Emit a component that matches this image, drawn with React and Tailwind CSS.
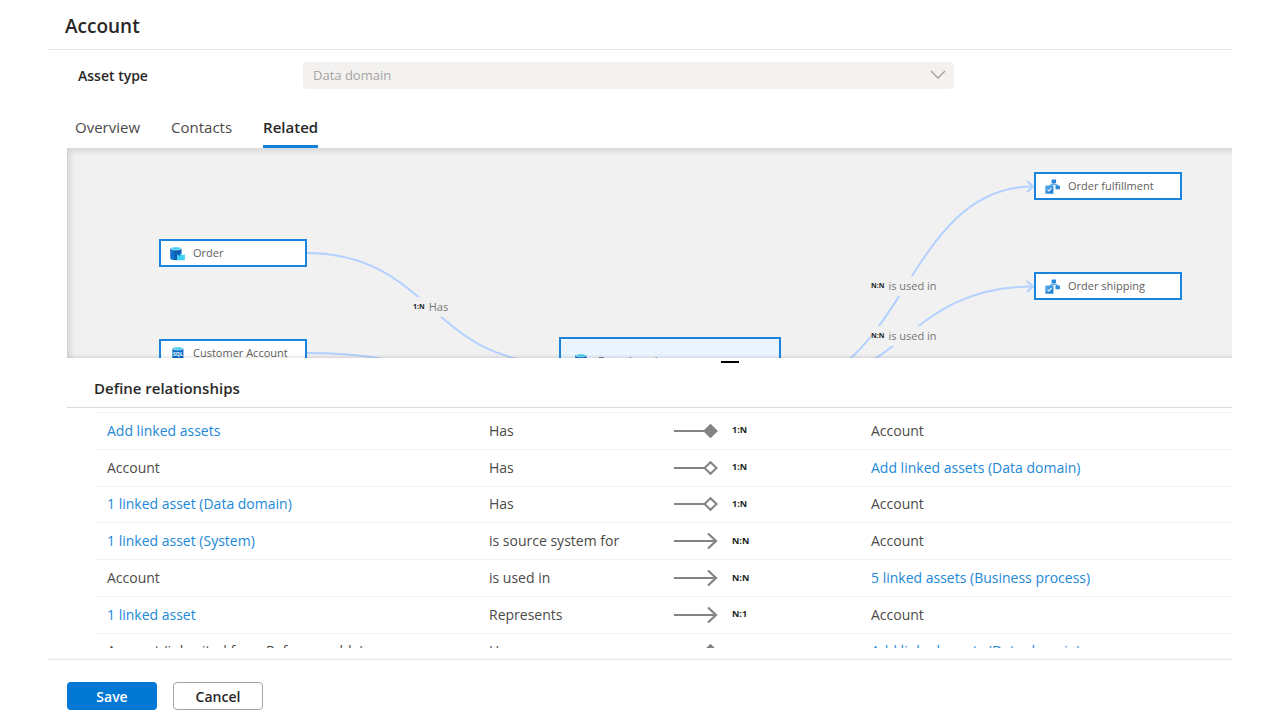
import React from "react";

const tabs = ["Overview", "Contacts", "Related"];

const rows = [
  { from: "Add linked assets", fromLink: true, verb: "Has", kind: "solid", ratio: "1:N", to: "Account" },
  { from: "Account", verb: "Has", kind: "hollow", ratio: "1:N", to: "Add linked assets (Data domain)", toLink: true },
  { from: "1 linked asset (Data domain)", fromLink: true, verb: "Has", kind: "hollow", ratio: "1:N", to: "Account" },
  { from: "1 linked asset (System)", fromLink: true, verb: "is source system for", kind: "arrow", ratio: "N:N", to: "Account" },
  { from: "Account", verb: "is used in", kind: "arrow", ratio: "N:N", to: "5 linked assets (Business process)", toLink: true },
  { from: "1 linked asset", fromLink: true, verb: "Represents", kind: "arrow", ratio: "N:1", to: "Account" },
  { from: "Account (inherited from Referenceable)", verb: "Has", kind: "solid", ratio: "1:N", to: "Add linked assets (Data domain)", toLink: true },
];

function DatabaseIcon({ crown }) {
  return (
    <svg width="15" height="15" viewBox="0 0 16 16" aria-hidden="true">
      <path d="M0.5 2.5v10.6c0 1.1 2.6 2 5.900 2s5.900-.9 5.900-2V2.500z" fill="#0a5fb4" />
      <path d="M0.5 2.500v10.600c0 1 1.800 1.700 4.200 1.900V3z" fill="#1173cf" />
      <ellipse cx="6.400" cy="2.500" rx="5.900" ry="2" fill="#e4f6fb" />
      <ellipse cx="6.400" cy="2.600" rx="4.700" ry="1.400" fill="#45cfee" />
      {crown && <path d="M7.500 8.700l2.300 2.100 1.900-3.600 1.600 3 2.500-1.800v6.900H7.500z" fill="#3fd0f5" />}
    </svg>
  );
}

function SqlIcon() {
  return (
    <svg width="15" height="15" viewBox="0 0 16 16" aria-hidden="true">
      <path d="M2.500 2.500v10.600c0 1.100 2.600 2 5.900 2s5.900-.9 5.900-2V2.500z" fill="#0b6fc8" />
      <ellipse cx="8.400" cy="2.500" rx="5.900" ry="2" fill="#e4f6fb" />
      <ellipse cx="8.400" cy="2.600" rx="4.700" ry="1.400" fill="#45cfee" />
      <text x="8.400" y="10.500" textAnchor="middle" fontSize="5.500" fontWeight="700" fill="#fff">SQL</text>
    </svg>
  );
}

function ProcessIcon() {
  return (
    <svg width="15" height="15" viewBox="0 0 16 16" aria-hidden="true">
      <defs>
        <linearGradient id="process-box" x1="0" y1="0" x2="1" y2="1">
          <stop offset="0" stopColor="#5ab0f2" />
          <stop offset="1" stopColor="#1677cd" />
        </linearGradient>
      </defs>
      <path d="M9.200 4v2M5.500 7.500l1-1.600h5.500l1.400 1.600" fill="none" stroke="#69aee8" strokeWidth="1.600" />
      <rect x="7" y="0.500" width="4.800" height="3.900" rx="0.600" fill="#2b88d8" />
      <rect x="11.200" y="7" width="4.700" height="4" rx="0.600" fill="#2b88d8" />
      <rect x="0.300" y="7" width="8.700" height="8.700" rx="0.600" fill="url(#process-box)" />
      <path d="M2.700 11.300l1.500 1.500 2.700-3.300" fill="none" stroke="#fff" strokeWidth="1.200" />
    </svg>
  );
}

function Node({ place, icon, children }) {
  return (
    <div className={`absolute flex h-7 w-[148px] items-center gap-2 border-2 border-[#1a84dc] bg-white pl-[9px] text-[11px] text-[#605e5c] ${place}`}>
      {icon}
      <span>{children}</span>
    </div>
  );
}

function EdgeLabel({ place, ratio, children }) {
  return (
    <div className={`absolute flex h-5 items-center gap-1 bg-[#f1f1f1] text-[11px] text-[#797775] ${place}`}>
      <span className="text-[7px] font-bold text-[#201f1e]">{ratio}</span>
      <span>{children}</span>
    </div>
  );
}

function Diagram() {
  return (
    <section aria-label="Related assets" className="relative h-[210px] shrink-0 overflow-hidden bg-[#f1f1f1]">
      <svg className="absolute left-0 top-0" width="1165" height="210" viewBox="67 148 1165 210" fill="none" stroke="#b3d1ff" strokeWidth="2" aria-hidden="true">
        <path d="M306 253C431 253 431 363 556 363" />
        <path d="M306 353C429 353 429 386 553 386" />
        <path d="M780 386C905 386 905 186.500 1033 186.500" />
        <path d="M780 386C905 386 905 286.500 1033 286.500" />
        <path d="M1027 181l6 5.500-6 5.500M1027 281l6 5.500-6 5.500" />
      </svg>
      <EdgeLabel place="left-[346px] top-[149px]" ratio="1:N">Has</EdgeLabel>
      <EdgeLabel place="left-[804px] top-[128px]" ratio="N:N">is used in</EdgeLabel>
      <EdgeLabel place="left-[804px] top-[178px]" ratio="N:N">is used in</EdgeLabel>
      <Node place="left-[92px] top-[91px]" icon={<DatabaseIcon crown />}>Order</Node>
      <Node place="left-[92px] top-[191px]" icon={<SqlIcon />}>Customer Account</Node>
      <Node place="left-[967px] top-[24px]" icon={<ProcessIcon />}>Order fulfillment</Node>
      <Node place="left-[967px] top-[124px]" icon={<ProcessIcon />}>Order shipping</Node>
      <div className="absolute left-[492px] top-[189px] flex h-[74px] w-[222px] items-start gap-2 border-2 border-[#1a84dc] bg-[#ebf5ff] px-3.5 pt-3.5 text-[11px] text-[#605e5c]">
        <DatabaseIcon />
        <span>Data domain</span>
      </div>
      <div className="pointer-events-none absolute inset-y-0 left-0 -right-3 shadow-[inset_3px_3px_6px_rgba(0,0,0,0.12),inset_0_-2px_3px_rgba(0,0,0,0.08)]" />
    </section>
  );
}

function Connector({ kind }) {
  return (
    <svg width="46" height="18" viewBox="0 0 46 18" fill="none" stroke="#858381" strokeWidth="2" aria-hidden="true">
      {kind === "arrow" ? (
        <path d="M1 9h42M35 1.500l8 7.500-8 7.500" strokeWidth="2.200" />
      ) : (
        <>
          <path d="M1 9h31" />
          <path d="M31.500 9l6-5.800 6 5.800-6 5.800z" fill={kind === "solid" ? "#858381" : "#fff"} />
        </>
      )}
    </svg>
  );
}

function Asset({ link, children }) {
  return link ? <a href="#asset" className="text-[#2288d8]">{children}</a> : children;
}

export default function App() {
  return (
    <div className="h-screen bg-white px-12 font-['Open_Sans','Noto_Sans',sans-serif] text-sm text-[#4b4a48]">
      <div className="flex h-full flex-col">
        <header className="flex h-[50px] shrink-0 items-center border-b border-[#e6e6e6] pl-[17px] pt-1">
          <h1 className="text-[19px] font-semibold text-[#292827]">Account</h1>
        </header>

        <div className="flex min-h-0 flex-1 flex-col pl-[19px]">
          <div className="flex shrink-0 items-center pl-[11px] pt-3">
            <label htmlFor="asset-type" className="w-[225px] font-semibold text-[#292827]">Asset type</label>
            <div className="relative w-[651px]">
              <select id="asset-type" disabled className="h-[27px] w-full appearance-none rounded-sm bg-[#f3f2f1] px-2.5 text-[13px] text-[#a6a4a2] opacity-100">
                <option>Data domain</option>
              </select>
              <svg className="pointer-events-none absolute right-2 top-[5px]" width="16" height="16" viewBox="0 0 16 16" fill="none" stroke="#a19f9d" strokeWidth="1.300" aria-hidden="true">
                <path d="M1 4l7 7 7-7" />
              </svg>
            </div>
          </div>

          <div role="tablist" className="mt-5 flex h-[39px] shrink-0 gap-[31px] pl-2 text-[15px]">
            {tabs.map((tab) => (
              <button
                key={tab}
                type="button"
                role="tab"
                aria-selected={tab === "Related"}
                className={tab === "Related" ? "border-b-[3px] border-[#1080d8] pt-0.5 font-semibold text-[#292827]" : "border-b-[3px] border-transparent pt-0.5"}
              >
                {tab}
              </button>
            ))}
          </div>

          <Diagram />

          <section className="relative flex min-h-0 flex-1 flex-col">
            <div className="absolute left-[654px] top-[3px] h-0.5 w-[18px] bg-black" />
            <h2 className="flex h-[50px] shrink-0 items-center border-b border-[#dcdcdc] pl-[27px] pt-3 text-[15px] font-semibold text-[#292827]">
              Define relationships
            </h2>
            <div className="mb-[11px] min-h-0 flex-1 overflow-y-auto pl-[27px] pt-1 [scrollbar-width:none]">
              <table className="h-[257px] w-full table-fixed border-collapse text-left">
                <colgroup>
                  <col className="w-[382px]" />
                  <col className="w-[184px]" />
                  <col className="w-[198px]" />
                  <col />
                </colgroup>
                <tbody>
                  {rows.map((row, i) => (
                    <tr key={i} className="border-t border-[#f2f2f2]">
                      <td className="pl-[13px]"><Asset link={row.fromLink}>{row.from}</Asset></td>
                      <td className="pl-[13px]">{row.verb}</td>
                      <td className="pl-[13px]">
                        <div className="flex items-center gap-[13px]">
                          <Connector kind={row.kind} />
                          <span className="text-[9px] font-bold text-[#201f1e]">{row.ratio}</span>
                        </div>
                      </td>
                      <td className="pl-[13px]"><Asset link={row.toLink}>{row.to}</Asset></td>
                    </tr>
                  ))}
                </tbody>
              </table>
            </div>
          </section>
        </div>

        <footer className="flex h-[61px] shrink-0 gap-4 border-t border-[#e6e6e6] pl-[19px] pt-[22px] font-semibold">
          <button type="button" className="h-7 w-[90px] rounded-sm bg-[#0078d4] pt-0.5 text-white">Save</button>
          <button type="button" className="h-7 w-[90px] rounded-sm border border-[#a5a4a2] bg-white pt-0.5 text-[#292827]">Cancel</button>
        </footer>
      </div>
    </div>
  );
}
